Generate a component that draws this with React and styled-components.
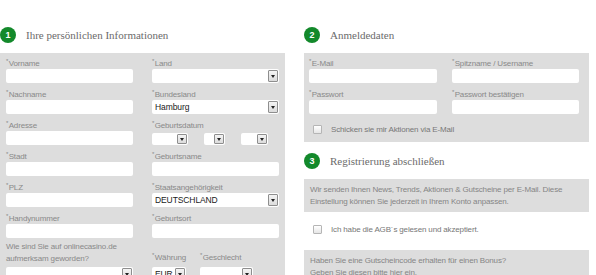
import React from 'react';
import styled, { createGlobalStyle } from 'styled-components';

const GlobalStyle = createGlobalStyle`
	body {
		margin: 0;
		background: #ffffff;
		font-family: "Liberation Sans", Arial, sans-serif;
	}
`;

const Page = styled.div`
	display: grid;
	grid-template-columns: 285px 285px;
	column-gap: 19px;
	width: 596px;
	padding-top: 27px;
	box-sizing: border-box;
`;

const Column = styled.section`
	display: flex;
	flex-direction: column;
`;

const SectionHead = styled.div`
	display: flex;
	align-items: center;
	gap: 10px;
	height: 16px;
	margin-top: ${(p) => p.$top || 0}px;
	margin-bottom: 10px;
`;

const StepCircle = styled.span`
	display: flex;
	align-items: center;
	justify-content: center;
	width: 16px;
	height: 16px;
	border-radius: 50%;
	background: #13892b;
	color: #ffffff;
	font-size: 9px;
	font-weight: bold;
`;

const SectionTitle = styled.h2`
	margin: 0;
	font-family: "Liberation Serif", "Times New Roman", serif;
	font-size: 11px;
	font-weight: normal;
	color: #6b6b6b;
`;

const Panel = styled.div`
	background: #dddddd;
	padding: ${(p) => p.$pad};
`;

const FieldGrid = styled.div`
	display: grid;
	grid-template-columns: ${(p) => p.$cols};
	column-gap: ${(p) => p.$gap}px;
	row-gap: 6px;
	align-items: end;
	margin-top: ${(p) => p.$top || 0}px;
`;

const Field = styled.div`
	display: flex;
	flex-direction: column;
	width: ${(p) => (p.$w ? `${p.$w}px` : 'auto')};
`;

const Label = styled.label`
	font-size: 8px;
	line-height: ${(p) => (p.$tall ? 12 : 11)}px;
	letter-spacing: -0.15px;
	color: #898989;
	white-space: nowrap;
	margin-bottom: ${(p) => p.$gapBelow || 0}px;
`;

const Star = styled.sup`
	font-size: 6px;
	line-height: 0;
	vertical-align: 3px;
	margin-right: 0.5px;
`;

const TextInput = styled.div`
	height: 14px;
	background: #ffffff;
	border-radius: 2px;
`;

const SelectBox = styled.div`
	display: flex;
	align-items: center;
	justify-content: space-between;
	height: ${(p) => p.$h || 14}px;
	width: ${(p) => (p.$w ? `${p.$w}px` : 'auto')};
	background: #ffffff;
	border-radius: 2px;
	box-sizing: border-box;
`;

const SelectValue = styled.span`
	padding-left: 3px;
	font-size: 8.5px;
	letter-spacing: -0.1px;
	color: #1a1a1a;
`;

const ArrowButton = styled.span`
	display: flex;
	align-items: center;
	justify-content: center;
	width: 10px;
	height: calc(100% - 2px);
	margin-right: 1px;
	border: 1px solid #8e8e8e;
	border-radius: 1px;
	background: linear-gradient(#f4f4f4, #dcdcdc);
	box-sizing: border-box;

	&::after {
		content: '';
		border-left: 2.5px solid transparent;
		border-right: 2.5px solid transparent;
		border-top: 3px solid #222222;
	}
`;

const DateRow = styled.div`
	display: flex;
	gap: 16px;
	margin-top: 2px;
`;

const SmallRow = styled.div`
	display: flex;
	gap: 14px;
	align-items: flex-end;
`;

const CheckRow = styled.div`
	display: flex;
	align-items: center;
	gap: 9px;
	height: 10px;
	padding-left: ${(p) => p.$indent}px;
	margin-top: ${(p) => p.$top}px;
`;

const CheckBox = styled.span`
	width: 9px;
	height: 9px;
	box-sizing: border-box;
	border: 1px solid #b5b5b5;
	background: linear-gradient(#ffffff, #e6e6e6);
	border-radius: 1px;
`;

const CheckText = styled.span`
	font-size: 8px;
	letter-spacing: -0.15px;
	color: #777777;
`;

const InfoBox = styled.div`
	background: #dddddd;
	padding: 5px 6px 4px;
	margin-top: ${(p) => p.$top || 0}px;
	font-size: 8px;
	line-height: 12px;
	letter-spacing: -0.15px;
	color: #858585;
`;

const Select = ({ value, w, h }) => (
	<SelectBox $w={w} $h={h}>
		<SelectValue>{value}</SelectValue>
		<ArrowButton />
	</SelectBox>
);

const Req = ({ children }) => (
	<>
		<Star>*</Star>
		{children}
	</>
);

const InputField = ({ label }) => (
	<Field>
		<Label>
			<Req>{label}</Req>
		</Label>
		<TextInput />
	</Field>
);

const SelectField = ({ label, value }) => (
	<Field>
		<Label>
			<Req>{label}</Req>
		</Label>
		<Select value={value} />
	</Field>
);

export default function App() {
	return (
		<>
			<GlobalStyle />
			<Page>
				<Column>
					<SectionHead>
						<StepCircle>1</StepCircle>
						<SectionTitle>Ihre persönlichen Informationen</SectionTitle>
					</SectionHead>
					<Panel $pad="5px 6px 10px">
						<FieldGrid $cols="127px 127px" $gap={19}>
							<InputField label="Vorname" />
							<SelectField label="Land" value="" />
							<InputField label="Nachname" />
							<SelectField label="Bundesland" value="Hamburg" />
							<InputField label="Adresse" />
							<Field>
								<Label>
									<Req>Geburtsdatum</Req>
								</Label>
								<DateRow>
									<Select w={36} h={12} />
									<Select w={21} h={12} />
									<Select w={27} h={12} />
								</DateRow>
							</Field>
							<InputField label="Stadt" />
							<InputField label="Geburtsname" />
							<InputField label="PLZ" />
							<SelectField label="Staatsangehörigkeit" value="DEUTSCHLAND" />
							<InputField label="Handynummer" />
							<InputField label="Geburtsort" />
						</FieldGrid>
						<FieldGrid $cols="127px 127px" $gap={19} $top={3}>
							<Field>
								<Label $tall $gapBelow={2}>
									Wie sind Sie auf onlinecasino.de
									<br />
									aufmerksam geworden?
								</Label>
								<Select />
							</Field>
							<SmallRow>
								<Field $w={34}>
									<Label $gapBelow={4}>
										<Req>Währung</Req>
									</Label>
									<Select value="EUR" />
								</Field>
								<Field $w={53}>
									<Label $gapBelow={4}>
										<Req>Geschlecht</Req>
									</Label>
									<Select />
								</Field>
							</SmallRow>
						</FieldGrid>
					</Panel>
				</Column>

				<Column>
					<SectionHead>
						<StepCircle>2</StepCircle>
						<SectionTitle>Anmeldedaten</SectionTitle>
					</SectionHead>
					<Panel $pad="5px 10px 8px 5px">
						<FieldGrid $cols="128px 127px" $gap={15}>
							<InputField label="E-Mail" />
							<InputField label="Spitzname / Username" />
							<InputField label="Passwort" />
							<InputField label="Passwort bestätigen" />
						</FieldGrid>
						<CheckRow $indent={4} $top={10}>
							<CheckBox />
							<CheckText>Schicken sie mir Aktionen via E-Mail</CheckText>
						</CheckRow>
					</Panel>

					<SectionHead $top={11}>
						<StepCircle>3</StepCircle>
						<SectionTitle>Registrierung abschließen</SectionTitle>
					</SectionHead>
					<InfoBox>
						Wir senden Ihnen News, Trends, Aktionen &amp; Gutscheine per E-Mail. Diese
						<br />
						Einstellung können Sie jederzeit in Ihrem Konto anpassen.
					</InfoBox>
					<CheckRow $indent={9} $top={12}>
						<CheckBox />
						<CheckText>Ich habe die AGB´s gelesen und akzeptiert.</CheckText>
					</CheckRow>
					<InfoBox $top={16}>
						Haben Sie eine Gutscheincode erhalten für einen Bonus?
						<br />
						Geben Sie diesen bitte hier ein.
					</InfoBox>
				</Column>
			</Page>
		</>
	);
}
